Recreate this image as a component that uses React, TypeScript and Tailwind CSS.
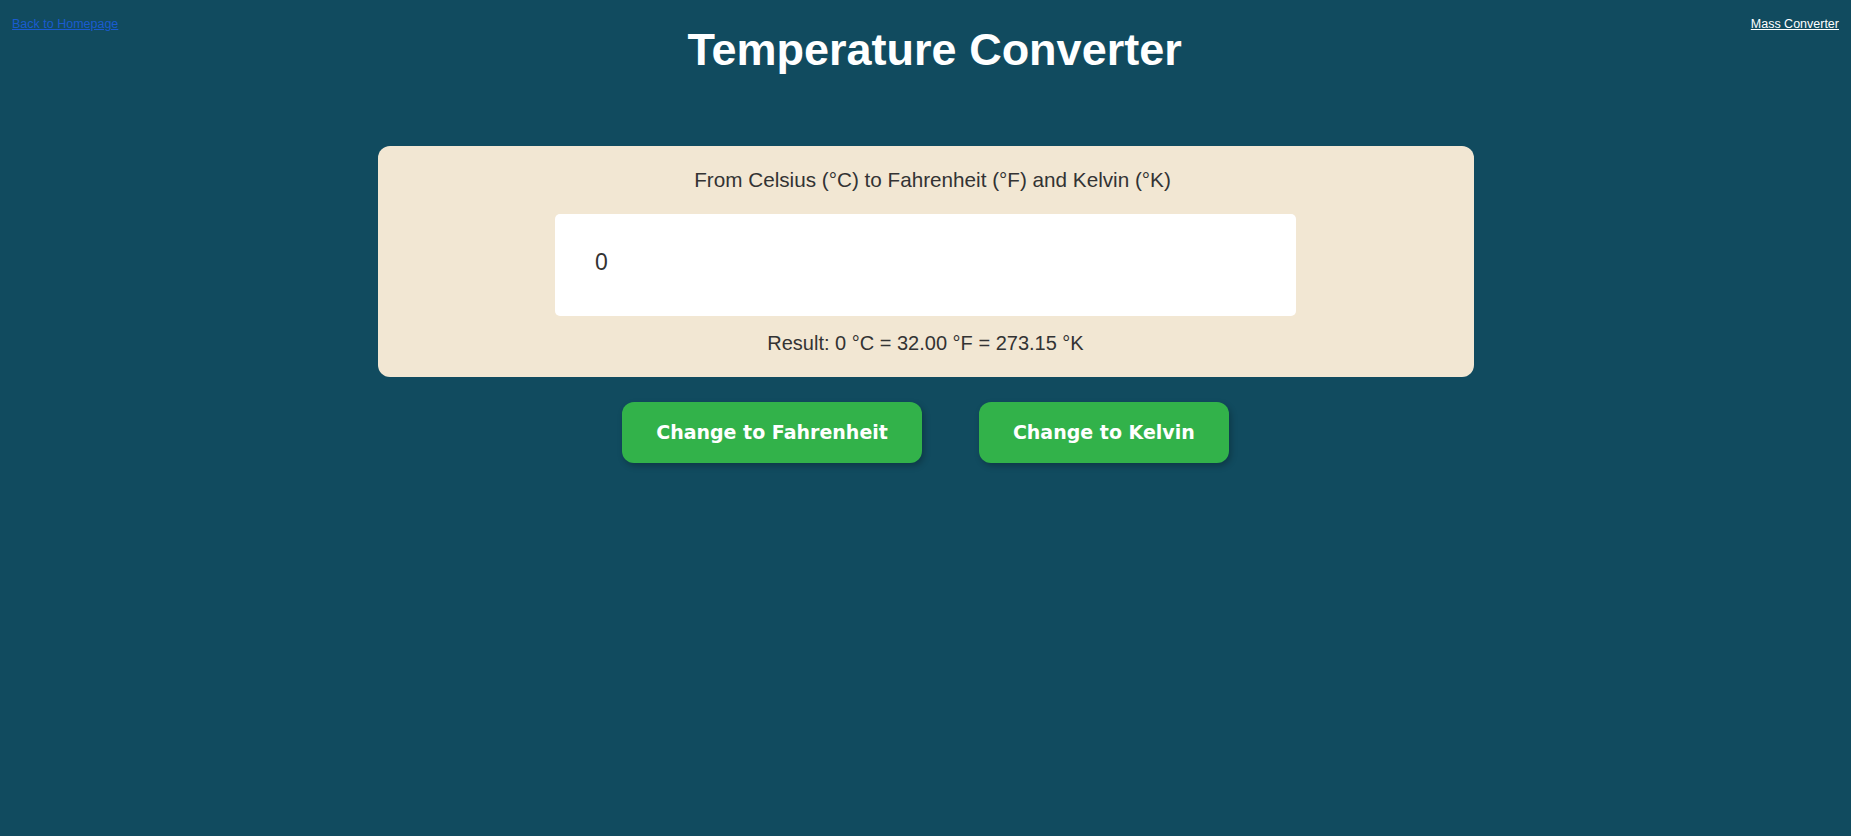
import { useState } from "react"

export default function App() {
  const [value, setValue] = useState("0")
  const [mode, setMode] = useState("celsius")

  const c = parseFloat(value) || 0
  const f = (c * 9) / 5 + 32
  const k = c + 273.15

  return (
    <div className="min-h-screen w-full bg-[#114b5f] font-['Liberation_Sans',Arial,sans-serif]">
      <header className="flex items-start justify-between px-3 pt-[17px]">
        <a href="#home" className="text-[12.5px] leading-[15px] text-[#1a5bd0] underline">
          Back to Homepage
        </a>
        <h1 className="mt-[9px] text-[45px] font-bold leading-[48px] text-white">
          Temperature Converter
        </h1>
        <a href="#mass" className="text-[12.5px] leading-[15px] text-white underline">
          Mass Converter
        </a>
      </header>

      <main className="mt-[72px] flex flex-col items-center">
        <section className="flex w-[1096px] flex-col items-center rounded-xl bg-[#f2e7d3] pt-[22px] pb-[22px] text-[#333]">
          <p className="pl-[14px] text-[20.7px] leading-[24px]">
            From Celsius (°C) to Fahrenheit (°F) and Kelvin (°K)
          </p>
          <input
            type="text"
            value={value}
            onChange={(e) => setValue(e.target.value)}
            className="mt-[22px] h-[102px] w-[741px] rounded-[5px] bg-white pl-[40px] pb-[6px] text-[23px] text-[#333] outline-none"
          />
          <p className="mt-[15px] text-[20px] leading-[24px]">
            Result: {c} °C = {f.toFixed(2)} °F = {k.toFixed(2)} °K
          </p>
        </section>

        <div className="mt-[25px] flex gap-[57px] font-['DejaVu_Sans',sans-serif]">
          <button
            onClick={() => setMode("fahrenheit")}
            className="h-[61px] cursor-pointer rounded-xl bg-[#32b24a] px-[34px] text-[19px] font-bold text-white shadow-[2px_3px_6px_rgba(0,0,0,0.25)]"
          >
            Change to Fahrenheit
          </button>
          <button
            onClick={() => setMode("kelvin")}
            className="h-[61px] cursor-pointer rounded-xl bg-[#32b24a] px-[34px] text-[19px] font-bold text-white shadow-[2px_3px_6px_rgba(0,0,0,0.25)]"
          >
            Change to Kelvin
          </button>
        </div>
        <span className="hidden">{mode}</span>
      </main>
    </div>
  )
}
